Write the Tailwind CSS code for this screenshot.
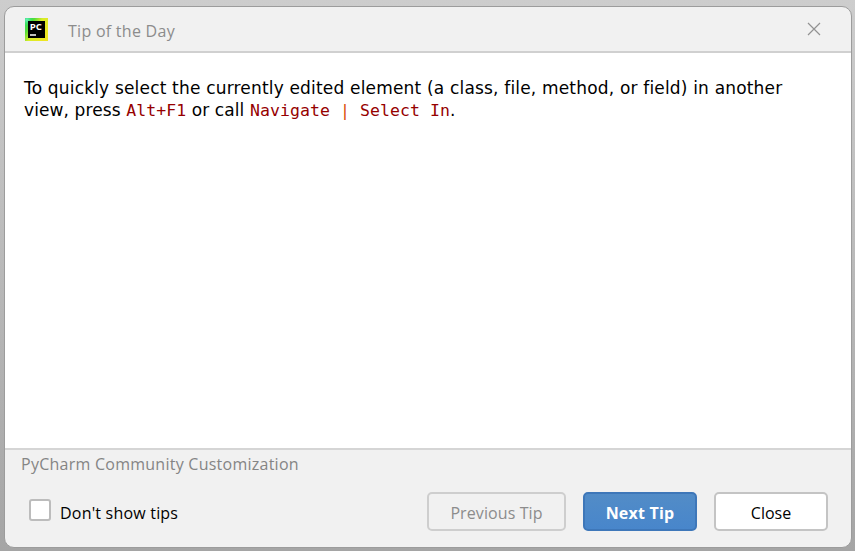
<!DOCTYPE html>
<html lang="en">
<head>
<meta charset="utf-8">
<title>Tip of the Day</title>
<script src="https://cdn.jsdelivr.net/npm/@tailwindcss/browser@4"></script>
</head>
<body class="h-[551px] w-[855px] overflow-hidden bg-linear-to-b from-[#cdcdcd] to-[#a5a5a5] pt-[6px] pl-[4px] font-['Open_Sans','Noto_Sans',sans-serif] text-[16px]">
<main class="flex h-[542px] w-[848px] flex-col overflow-hidden rounded-[10px] border border-[#9c9c9c] bg-[#f1f1f1]">
  <header class="flex h-[46px] shrink-0 items-center border-b-2 border-[#d0d0d0] pl-[20px] pr-[30px]">
    <svg class="size-[23px] shrink-0" viewBox="0 0 23 23">
      <defs>
        <linearGradient id="g" x1="0" y1="0" x2="1" y2=".65"><stop offset="0" stop-color="#20df70"/><stop offset=".3" stop-color="#55dc38"/><stop offset=".55" stop-color="#d8ec28"/><stop offset="1" stop-color="#eee622"/></linearGradient>
        <radialGradient id="c" cx=".08" cy=".08" r=".3"><stop offset="0" stop-color="#70efc0"/><stop offset="1" stop-color="#20df50" stop-opacity="0"/></radialGradient>
      </defs>
      <rect width="23" height="23" fill="url(#g)"/><rect width="23" height="23" fill="url(#c)"/>
      <rect x="3" y="3" width="17" height="17" fill="#000"/>
      <text x="4.7" y="11.5" fill="#fff" font-family="Open Sans" font-weight="700" font-size="9.5" textLength="12.2" lengthAdjust="spacingAndGlyphs">PC</text>
      <path d="M5 17h6" stroke="#fff" stroke-width="1.4"/>
    </svg>
    <h1 class="ml-[20px] pt-[3px] leading-6 tracking-[0.27px] text-[#8c8c8c]">Tip of the Day</h1>
    <svg class="ml-auto size-[14px]" viewBox="0 0 14 14" fill="none" stroke="#929292" stroke-width="1.2"><path d="M1 1l12 12M13 1L1 13"/></svg>
  </header>
  <section class="h-[395px] shrink-0 bg-white pt-[24px] pl-[19px] font-['DejaVu_Sans',sans-serif] text-[17px] leading-[22px] tracking-[0.18px] text-black">
    <p class="whitespace-nowrap">To quickly select the currently edited element (a class, file, method, or field) in another<br><span class="tracking-[0.1px]">view, press <code class="font-['DejaVu_Sans_Mono',monospace] text-[16.5px] tracking-[0.07px] text-[#960000]">Alt+F1</code> or call <code class="font-['DejaVu_Sans_Mono',monospace] text-[16.5px] tracking-[0.07px] text-[#960000]">Navigate <span class="text-[#d9500a]">|</span> Select In</code>.</span></p>
  </section>
  <footer class="flex grow flex-col border-t-2 border-[#d5d5d5] pl-[16px] pr-[23px]">
    <p class="mt-[2px] leading-6 tracking-[0.25px] text-[#858585]">PyCharm Community Customization</p>
    <div class="mt-[15px] flex h-[40px] items-center">
      <label class="flex items-center pl-[8px] text-black"><span class="mb-[3px] size-[22px] rounded-[3px] border-2 border-[#bcbcbc] bg-white"></span><span class="ml-[9px] pt-[3px] leading-6 tracking-[0.2px]">Don't show tips</span></label>
      <div class="ml-auto flex gap-[17px]">
        <button class="h-[39px] w-[139px] rounded-[5px] border-2 border-[#cecece] pt-[4px] tracking-[0.1px] text-[#8c8c8c]">Previous Tip</button>
        <button class="h-[39px] w-[114px] rounded-[5px] border-2 border-[#3e77b9] bg-linear-to-b from-[#528cc7] to-[#4886cb] pt-[4px] font-bold tracking-[0.2px] text-white">Next Tip</button>
        <button class="h-[39px] w-[114px] rounded-[5px] border-2 border-[#c4c4c4] bg-white pt-[4px] text-black">Close</button>
      </div>
    </div>
  </footer>
</main>
</body>
</html>
